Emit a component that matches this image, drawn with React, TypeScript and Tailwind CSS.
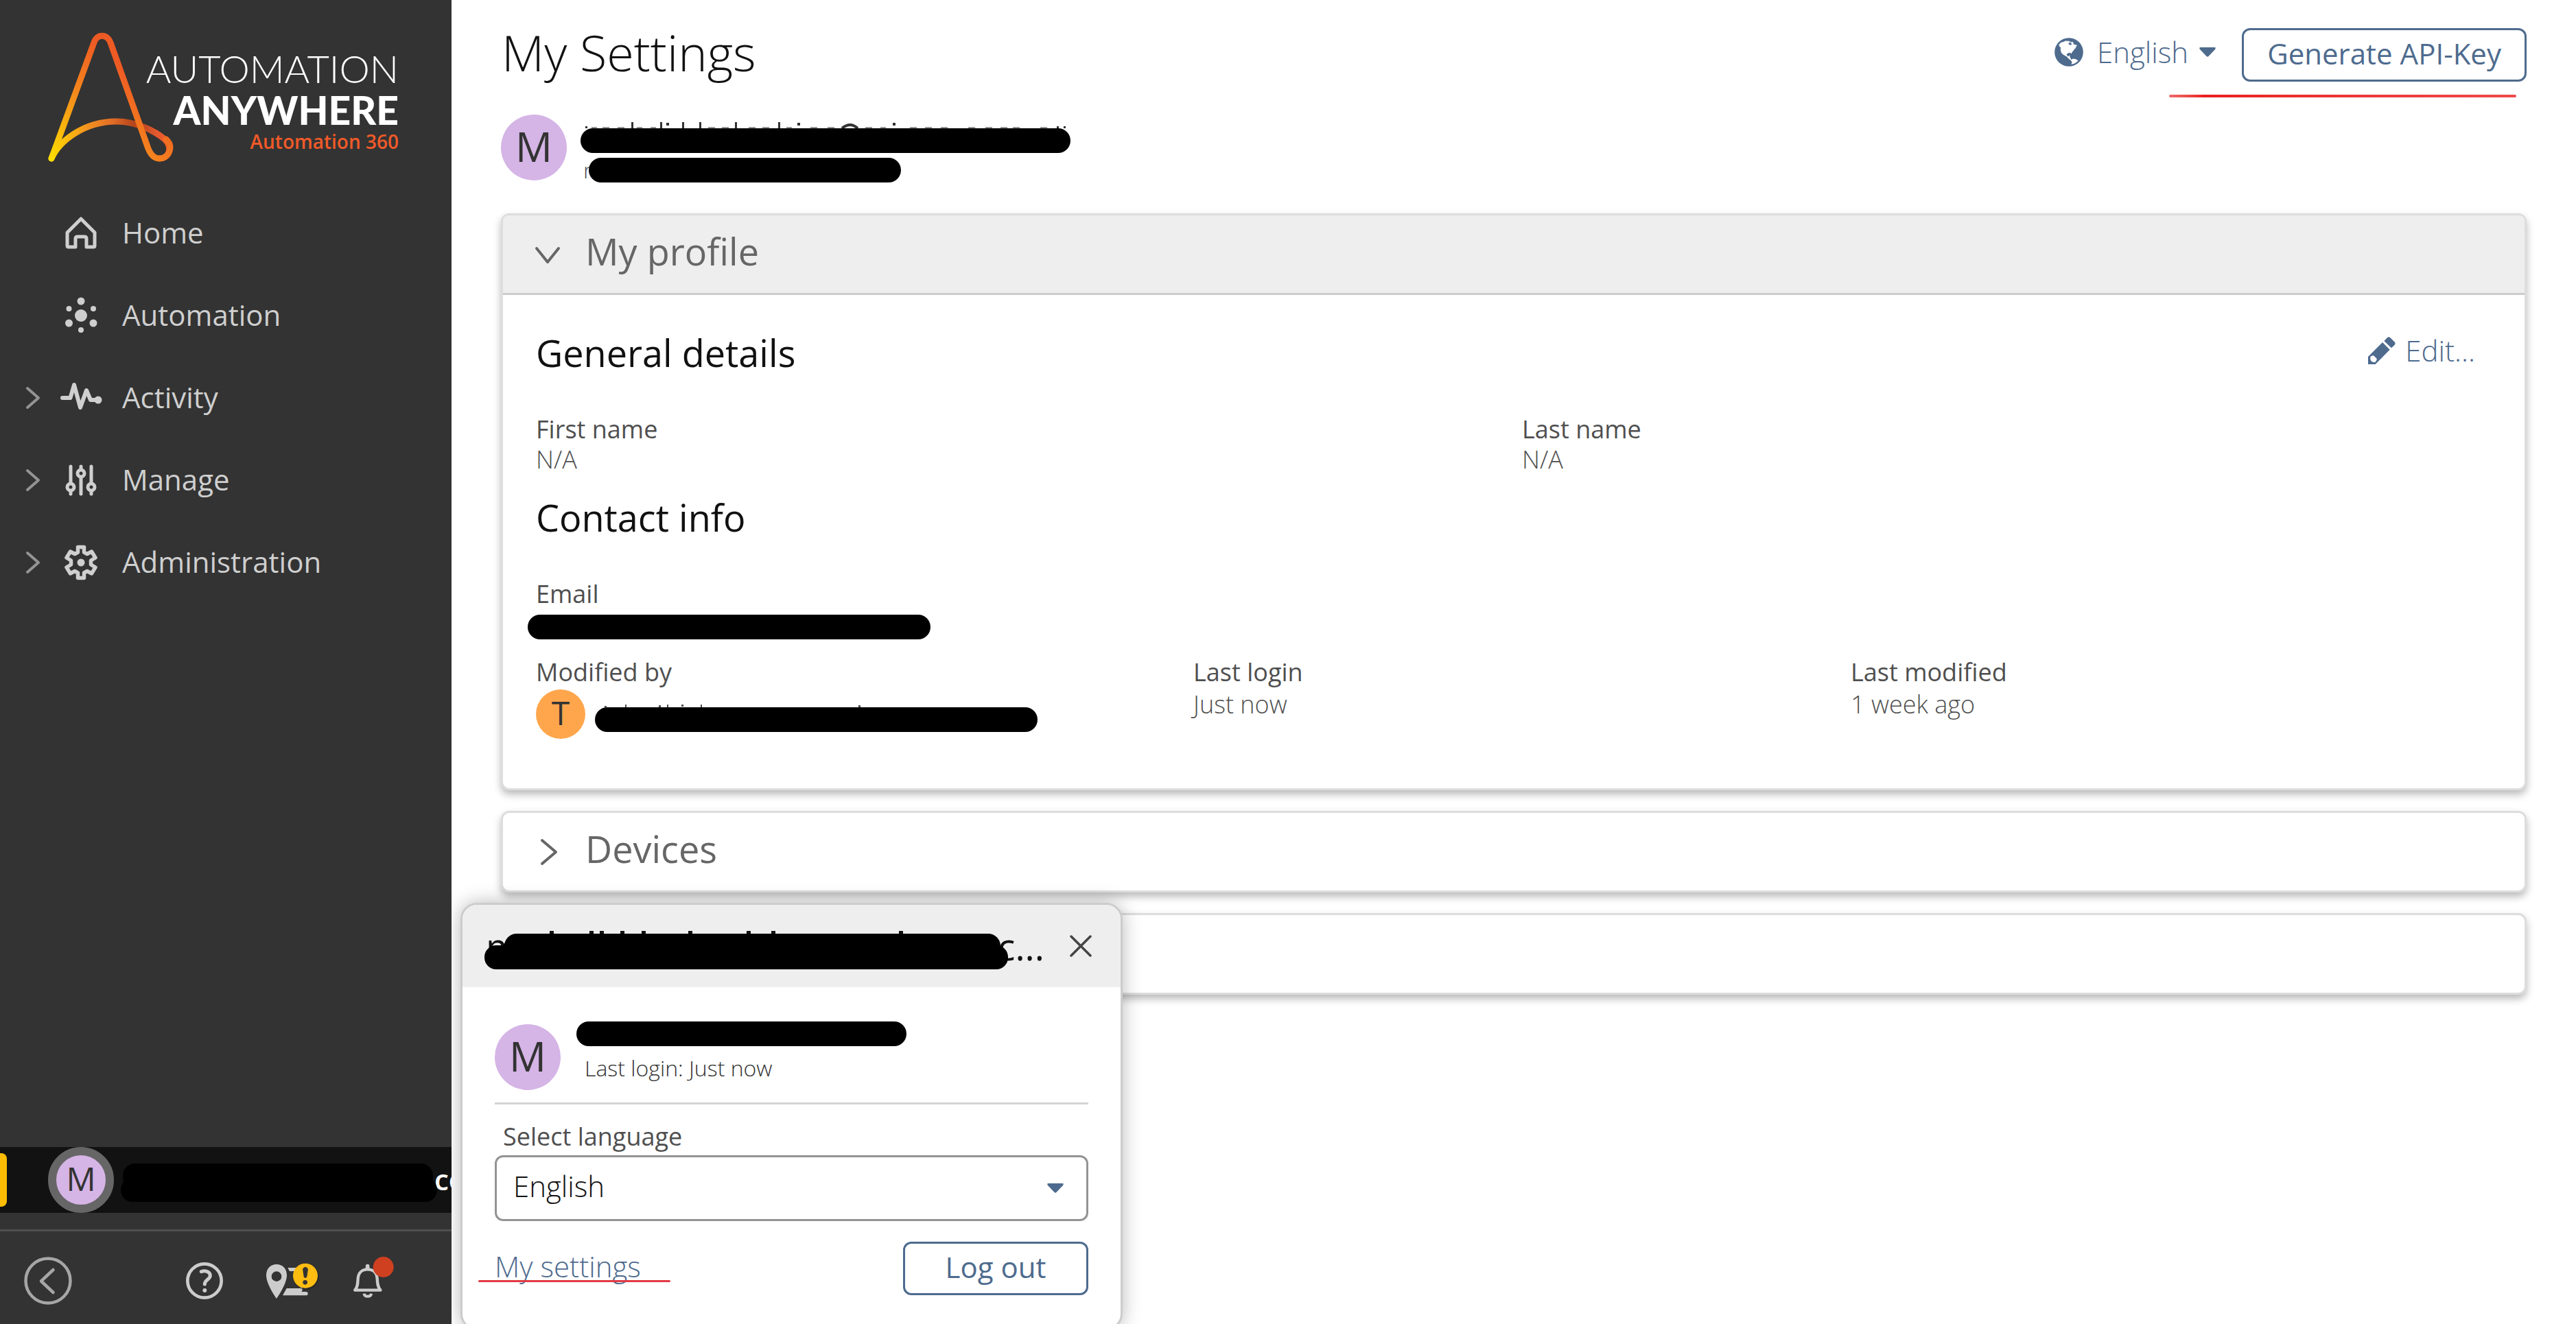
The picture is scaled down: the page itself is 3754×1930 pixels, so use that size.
import type { ReactNode } from "react";

const SANS = "font-['Open_Sans','Noto_Sans',sans-serif]";
const LATO = "font-['Lato','Open_Sans',sans-serif]";

function BrandMark() {
  return (
    <svg className="h-[196px] w-[190px] shrink-0" viewBox="66 44 190 196" fill="none" aria-hidden="true">
      <defs>
        <linearGradient id="stem" x1="74" y1="231" x2="190" y2="110" gradientUnits="userSpaceOnUse">
          <stop offset="0" stopColor="#ffdd00" />
          <stop offset="0.55" stopColor="#f58a1c" />
          <stop offset="1" stopColor="#ee5a24" />
        </linearGradient>
        <linearGradient id="arch" x1="74" y1="0" x2="250" y2="0" gradientUnits="userSpaceOnUse">
          <stop offset="0" stopColor="#ffdd00" />
          <stop offset="0.3" stopColor="#f3921f" />
          <stop offset="0.5" stopColor="#e36f27" />
          <stop offset="0.68" stopColor="#b5451b" />
          <stop offset="0.77" stopColor="#c04a20" />
          <stop offset="0.88" stopColor="#e65a30" />
          <stop offset="1" stopColor="#ee5a24" />
        </linearGradient>
      </defs>
      <path
        d="M75 231 C86 206 122 177 170 177 C198 177 226 191 240 203 C252 215 247 231 232 231"
        stroke="url(#arch)"
        strokeWidth="9"
        strokeLinecap="round"
      />
      <path
        d="M75 231 L137 62 C141 49 156 49 161 62 L214 211 C218 224 224 231 232 231 C242 231 248 223 248 214 C248 209 245 206 242 203"
        stroke="url(#stem)"
        strokeWidth="9"
        strokeLinecap="round"
        strokeLinejoin="round"
      />
    </svg>
  );
}

function NavSvg({ children }: { children: ReactNode }) {
  return (
    <svg className="h-16 w-16 shrink-0" viewBox="0 0 64 64" fill="none" stroke="#cfcfcf" strokeLinecap="round" strokeLinejoin="round" aria-hidden="true">
      {children}
    </svg>
  );
}

const homeIcon = (
  <NavSvg>
    <path d="M12 31 L32 11 L52 31 V50 Q52 52 50 52 H40 V40 Q40 37 37 37 H27 Q24 37 24 40 V52 H14 Q12 52 12 50 Z" strokeWidth="5" />
  </NavSvg>
);

const automationIcon = (
  <NavSvg>
    <g fill="#cfcfcf" stroke="none">
      <circle cx="32" cy="32" r="9" />
      <circle cx="32" cy="11" r="5.5" />
      <circle cx="14.5" cy="22" r="4" />
      <circle cx="50" cy="22" r="4" />
      <circle cx="14.5" cy="43" r="5.5" />
      <circle cx="50" cy="43" r="5.5" />
      <circle cx="32" cy="53" r="4" />
    </g>
  </NavSvg>
);

const activityIcon = (
  <NavSvg>
    <path d="M5 32 H16.500 L22 13 L31 46 L40 21 L46 35 H56" strokeWidth="6" />
    <circle cx="57" cy="35" r="5.500" fill="#cfcfcf" stroke="none" />
  </NavSvg>
);

const manageIcon = (
  <NavSvg>
    <path d="M17 12 V36 M17 50 V52 M32 12 V15 M32 28 V52 M47 12 V36 M47 50 V52" strokeWidth="5" />
    <circle cx="17" cy="42" r="5" strokeWidth="5" />
    <circle cx="32" cy="22" r="5" strokeWidth="5" />
    <circle cx="47" cy="42" r="5" strokeWidth="5" />
  </NavSvg>
);

const adminIcon = (
  <NavSvg>
    <path
      d="M27.500 9.500 H36.500 V17 L41 19.500 L47.500 16 L53 25 L46.500 29 V35 L53 39 L47.500 48 L41 44.500 L36.500 47 V54.500 H27.500 V47 L23 44.500 L16.500 48 L11 39 L17.500 35 V29 L11 25 L16.500 16 L23 19.500 L27.500 17 Z"
      strokeWidth="5.500"
    />
    <circle cx="32" cy="32" r="5.500" fill="#cfcfcf" stroke="none" />
  </NavSvg>
);

const NAV = [
  { label: "Home", icon: homeIcon, expandable: false },
  { label: "Automation", icon: automationIcon, expandable: false },
  { label: "Activity", icon: activityIcon, expandable: true },
  { label: "Manage", icon: manageIcon, expandable: true },
  { label: "Administration", icon: adminIcon, expandable: true },
];

function Sidebar() {
  return (
    <aside className="relative z-20 flex w-[658px] shrink-0 flex-col overflow-hidden bg-[#333333]">
      <div className="flex h-[280px] items-start pt-11 pl-[66px]">
        <BrandMark />
        <div className={`-ml-10 flex w-[365px] flex-col items-end pt-[26px] whitespace-nowrap text-white ${LATO}`}>
          <span className="text-[56px] leading-[60px] font-light">AUTOMATION</span>
          <span className="text-[57px] leading-[60px] font-black">ANYWHERE</span>
          <span className={`text-[28px] leading-8 font-semibold text-[#f15a29] ${SANS}`}>Automation 360</span>
        </div>
      </div>

      <nav className="flex flex-col" aria-label="Main">
        {NAV.map((item) => (
          <a key={item.label} href="#" className="flex h-[120px] items-center pl-9 text-[42px] text-[#cfcfcf]">
            <span className="mr-[26px] w-6">
              {item.expandable && (
                <svg className="h-9 w-6" viewBox="0 0 24 36" fill="none" stroke="#949494" strokeWidth="4" strokeLinecap="round" strokeLinejoin="round" aria-hidden="true">
                  <path d="M4 4 L20 18 L4 32" />
                </svg>
              )}
            </span>
            {item.icon}
            <span className="ml-7 pb-1">{item.label}</span>
          </a>
        ))}
      </nav>

      <button type="button" aria-label="Account" className="mt-auto flex h-24 w-full items-center bg-[#121212]">
        <span className="h-[78px] w-2.5 shrink-0 rounded-r-lg bg-[#ffbc03]" />
        <span className="ml-[60px] flex h-24 w-24 shrink-0 items-center justify-center rounded-full border-[12px] border-[#666666] bg-[#d5b4e6] pb-1 text-[48px] leading-none text-[#333333]">
          M
        </span>
        <svg className="relative z-10 ml-2.5 h-24 w-[461px] shrink-0" viewBox="0 0 461 96" aria-hidden="true">
          <rect x="3" y="24" width="452" height="38" rx="18" />
          <rect x="0" y="45" width="461" height="35" rx="17" />
        </svg>
        <span className="-ml-1 shrink-0 pb-1 text-[42px] font-semibold text-white">co</span>
      </button>

      <div className="mt-6 flex h-[138px] items-start border-t-[3px] border-[#4f4f4f] pt-[37px] pl-[35px]">
        <div className="flex items-center">
          <button type="button" aria-label="Collapse menu" className="h-[70px] w-[70px]">
            <svg className="h-full w-full" viewBox="0 0 70 70" fill="none" stroke="#a6a6a6" strokeWidth="4.500" strokeLinecap="round" aria-hidden="true">
              <circle cx="35" cy="35" r="32.500" />
              <path d="M42.500 19 L25 35.500 L42.500 52" strokeLinejoin="round" />
            </svg>
          </button>
          <button type="button" aria-label="Help" className="ml-[166px] h-[54px] w-[54px]">
            <svg className="h-full w-full" viewBox="63 57 162 162" fill="none" stroke="#cccccc" aria-hidden="true">
              <circle cx="144" cy="138" r="74" strokeWidth="14" />
              <path d="M130 98 C148 92 168 98 169 114 C170 134 145 132 145 153" strokeWidth="15" strokeLinecap="round" />
              <circle cx="145" cy="180" r="9" fill="#cccccc" stroke="none" />
            </svg>
          </button>
          <button type="button" aria-label="Tours" className="ml-[63px] h-[54px] w-[75px]">
            <svg className="h-full w-full overflow-visible" viewBox="414 57 225 162" fill="#cccccc" aria-hidden="true">
              <path
                fillRule="evenodd"
                d="M459 66 C432 66 414 86 414 114 C414 154 459 216 459 216 S504 154 504 114 C504 86 486 66 459 66 Z M459 97 A22 22 0 1 1 459 141 A22 22 0 1 1 459 97 Z"
              />
              <path d="M508 81 H545 V96 H516 Z" />
              <path d="M503 171 H558 L572 160 V180 L568 186 H588 A8 8 0 0 1 588 202 H486 Z" />
              <circle cx="588" cy="121" r="57" fill="#1f1f1f" opacity="0.5" />
              <circle cx="585" cy="116" r="54" fill="#ffbc11" />
              <path d="M573 86 Q585 68 597 86 L592 120 Q585 132 578 120 Z" fill="#333333" />
              <circle cx="584" cy="145" r="10" fill="#333333" />
            </svg>
          </button>
          <button type="button" aria-label="Notifications" className="ml-[52px] h-[54px] w-[59px]">
            <svg className="h-full w-full overflow-visible" viewBox="796 57 177 162" fill="none" stroke="#cccccc" strokeLinecap="round" aria-hidden="true">
              <path d="M858 74 V84" strokeWidth="17" />
              <path d="M803 178 C815 166 815 148 816 128 C818 102 835 88 858 88 C881 88 898 102 900 128 C901 148 902 166 914 178 V179 H803 Z" strokeWidth="13" strokeLinejoin="round" />
              <path d="M842 194 A17 16 0 0 0 875 194" strokeWidth="12" strokeLinecap="butt" />
              <circle cx="927" cy="78" r="45" fill="#cf4020" stroke="none" />
            </svg>
          </button>
        </div>
      </div>
    </aside>
  );
}

function Caret() {
  return (
    <svg className="h-3.5 w-6 shrink-0" viewBox="0 0 24 14" fill="#4e6b8e" aria-hidden="true">
      <path d="M2 0 H22 Q25 0 23 3 L13.500 13 Q12 14.500 10.500 13 L1 3 Q-1 0 2 0 Z" />
    </svg>
  );
}

function GlobeIcon() {
  return (
    <svg className="h-[42px] w-[42px] shrink-0" viewBox="69 108 125 125" aria-hidden="true">
      <circle cx="131.500" cy="170.500" r="62" fill="#4e6b8e" />
      <path
        fill="#ffffff"
        d="M88 138 L97 129 L110 125 L120 120 L122 124 L128 121 L134 125 L138 123 L139 128 L130 130 L131 137 L141 141 L144 133 L137 131 L146 125 L152 131 L150 136 L160 138 L168 143 L160 148 L163 152 L156 156 L152 163 L146 170 L142 177 L136 173 L126 176 L121 182 L128 189 L137 184 L135 190 L138 196 L142 203 L150 199 L162 201 L172 208 L165 214 L155 220 L142 223 L145 214 L140 206 L132 200 L122 190 L106 181 L98 172 L95 160 L96 150 L91 147 Z"
      />
    </svg>
  );
}

function PencilIcon() {
  return (
    <svg className="h-10 w-10 shrink-0" viewBox="63 71 120 120" fill="#4e6b8e" aria-hidden="true">
      <path d="M63 191 V158 L126 95 L158 127 L95 191 Z" />
      <path d="M133 89 L147 75 Q153 69 160 75 L178 93 Q185 99 179 106 L165 120 Z" />
      <path d="M73 158 L82 153 Q88 151 92 157 L101 167 Q102 173 98 177 L94 182 H84 Q74 177 73 170 Z" fill="#ffffff" />
    </svg>
  );
}

function Avatar({ letter, className }: { letter: string; className: string }) {
  return <span className={`flex shrink-0 items-center justify-center rounded-full pb-1 leading-none text-[#333333] ${className}`}>{letter}</span>;
}

const CARD = "rounded-xl border-[3px] border-[#dddddd] bg-white shadow-[0_6px_12px_rgba(0,0,0,0.28)]";

function Field({ label, children }: { label: string; children: ReactNode }) {
  return (
    <div className="text-[36px] leading-[44px] text-[#4f4f4f]">
      <dt>{label}</dt>
      <dd className="font-light">{children}</dd>
    </div>
  );
}

function ProfileCard() {
  return (
    <section className={`mt-[45px] ${CARD}`}>
      <h2>
        <button type="button" aria-expanded="true" className="flex h-[116px] w-full items-center rounded-t-lg border-b-[3px] border-[#cccccc] bg-[#eeeeee] pl-[41px] text-[54px] text-[#666666]">
          <svg className="h-12 w-12" viewBox="0 0 48 48" fill="none" stroke="#666666" strokeWidth="4" strokeLinecap="round" strokeLinejoin="round" aria-hidden="true">
            <path d="M8 15 L24 35 L40 15" />
          </svg>
          <span className="ml-[31px] pb-2">My profile</span>
        </button>
      </h2>
      <div className="px-12 pt-12 pb-[72px]">
        <div className="flex items-start justify-between">
          <h3 className="text-[54px] leading-[72px] text-[#111111]">General details</h3>
          <button type="button" className="flex items-center pr-6 text-[42px] leading-[66px] font-light text-[#4e6b8e]">
            <PencilIcon />
            <span className="ml-3.5">Edit...</span>
          </button>
        </div>
        <dl className="mt-[54px] grid grid-cols-2 gap-6">
          <Field label="First name">N/A</Field>
          <Field label="Last name">N/A</Field>
        </dl>
        <h3 className="mt-[26px] text-[54px] leading-[72px] text-[#111111]">Contact info</h3>
        <dl className="mt-[54px]">
          <Field label="Email">
            <span className="mt-2 -ml-3 block h-9 w-[587px] rounded-full bg-black" />
          </Field>
        </dl>
        <dl className="mt-[26px] grid grid-cols-3 gap-6">
          <Field label="Modified by">
            <span className="mt-[3px] flex items-start">
              <Avatar letter="T" className="h-[72px] w-[72px] bg-[#ffa64d] text-[48px] font-normal" />
              <span className="relative mt-[26px] ml-3.5 block h-9 w-[645px] rounded-full bg-black">
                <svg className="absolute bottom-full left-0 h-1 w-[645px]" viewBox="0 0 645 4" fill="#4f4f4f" aria-hidden="true">
                  <path d="M14 2h3v2h-3z M44 0h2v4h-2z M93 1h3v3h-3z M105 0h2v4h-2z M126 0h3v3h-3z M154 0h2v4h-2z M384 1h3v3h-3z" />
                </svg>
              </span>
            </span>
          </Field>
          <Field label="Last login">
            <span className="mt-[3px] block">Just now</span>
          </Field>
          <Field label="Last modified">
            <span className="mt-[3px] block">1 week ago</span>
          </Field>
        </dl>
      </div>
    </section>
  );
}

function Main() {
  return (
    <main className="min-w-0 flex-1 px-[72px] pt-[41px]">
      <header className="flex items-start justify-between">
        <h1 className="ml-px text-[72px] leading-[70px] font-light text-[#111111]">My Settings</h1>
        <div className="relative flex items-start">
          <button type="button" className="flex items-center text-[42px] leading-[70px] font-light text-[#4e6b8e]">
            <GlobeIcon />
            <span className="mr-4 ml-5">English</span>
            <Caret />
          </button>
          <button type="button" className="ml-[38px] h-[78px] rounded-xl border-[3px] border-[#4e6b8e] px-[34px] pb-1 text-[42px] leading-[66px] whitespace-nowrap text-[#4e6b8e]">
            Generate API-Key
          </button>
          <span className="absolute top-[97px] right-[15px] h-1 w-[506px] rounded-full bg-linear-to-r from-[#ee6a6a] via-[#ea1f1f] via-10% to-[#ee4a4a]" />
        </div>
      </header>

      <div className="mt-12 flex items-start">
        <Avatar letter="M" className="h-24 w-24 bg-[#d5b4e6] text-[60px]" />
        <div className="mt-5 ml-5">
          <div className="relative h-9 w-[714px] rounded-full bg-black">
            <svg className="absolute bottom-full left-0 h-[9px] w-[714px]" viewBox="0 0 714 9" fill="#333333" aria-hidden="true">
              <path d="M7 6h3v3h-3z M74 0h3v9h-3z M116 0h3v9h-3z M125 1h4v4h-4z M148 0h3v9h-3z M173 0h3v9h-3z M225 0h3v9h-3z M288 0h3v9h-3z M316 1h4v4h-4z M455 1h4v4h-4z M694 6h3v3h-3z M704 6h3v3h-3z" />
              <path
                opacity="0.5"
                d="M16 7h8v2h-8z M32 7h10v2h-10z M54 7h10v2h-10z M82 7h8v2h-8z M102 7h8v2h-8z M186 7h10v2h-10z M206 7h10v2h-10z M245 7h10v2h-10z M265 7h10v2h-10z M300 7h8v2h-8z M335 7h10v2h-10z M360 7h10v2h-10z M415 7h10v2h-10z M437 7h8v2h-8z M480 7h10v2h-10z M502 7h10v2h-10z M525 7h10v2h-10z M565 7h10v2h-10z M590 7h10v2h-10z M612 7h10v2h-10z M630 7h10v2h-10z M670 7h10v2h-10z"
              />
              <path d="M381 9 Q393 -1 404 9" fill="none" stroke="#333333" strokeWidth="4" />
            </svg>
          </div>
          <div className="relative mt-[7px] flex h-9 items-center">
            <span className="w-3 pl-1 text-[32px] leading-9 font-light text-[#4f4f4f]">m</span>
            <span className="relative h-9 w-[455px] rounded-full bg-black" />
          </div>
        </div>
      </div>

      <ProfileCard />

      <section className={`mt-[30px] ${CARD}`}>
        <h2>
          <button type="button" aria-expanded="false" className="flex h-[113px] w-full items-center pl-[41px] text-[54px] text-[#666666]">
            <svg className="h-12 w-12" viewBox="0 0 48 48" fill="none" stroke="#666666" strokeWidth="4" strokeLinecap="round" strokeLinejoin="round" aria-hidden="true">
              <path d="M16 7 L36 24 L16 41" />
            </svg>
            <span className="ml-[31px] pb-2">Devices</span>
          </button>
        </h2>
      </section>

      <section className={`mt-[30px] h-[119px] ${CARD}`} />
    </main>
  );
}

function AccountPopup() {
  return (
    <div role="dialog" aria-label="Account" className="absolute -bottom-[9px] left-[671px] z-10 w-[965px] rounded-3xl border-[3px] border-[#cccccc] bg-white shadow-[0_0_28px_rgba(0,0,0,0.28)]">
      <div className="flex h-[120px] items-center rounded-t-[21px] bg-[#eeeeee] pl-[34px]">
        <div className="relative flex w-[814px] justify-between text-[54px] leading-[72px] text-[#111111]">
          <span className="font-medium">m</span>
          <span>c...</span>
          <svg className="absolute inset-y-0 -left-2 h-full w-[780px]" viewBox="700 1343 780 72" aria-hidden="true">
            <path fill="#111111" d="M801 1357h6v8h-6z M859 1357h6v8h-6z M874 1357h6v8h-6z M904 1357h6v8h-6z M935 1357h6v8h-6z M1003 1357h6v8h-6z M1088 1357h6v8h-6z M1124 1357h6v8h-6z M1310 1357h6v8h-6z" />
            <rect x="735" y="1361" width="723" height="40" rx="18" />
            <rect x="706" y="1378" width="763" height="35" rx="17" />
          </svg>
        </div>
        <button type="button" aria-label="Close" className="ml-[37px] h-8 w-8">
          <svg className="h-full w-full" viewBox="0 0 32 32" stroke="#444444" strokeWidth="3.500" strokeLinecap="round" aria-hidden="true">
            <path d="M2 2 L30 30 M30 2 L2 30" />
          </svg>
        </button>
      </div>
      <div className="px-[47px] pt-[50px] pb-12">
        <div className="flex items-start">
          <Avatar letter="M" className="mt-1 h-24 w-24 bg-[#d5b4e6] text-[60px]" />
          <div className="ml-[23px]">
            <div className="h-9 w-[481px] rounded-full bg-black" />
            <p className="mt-3 ml-3 text-[32px] leading-10 font-light text-[#333333]">Last login: Just now</p>
          </div>
        </div>
        <hr className="mt-[18px] border-t-[3px] border-[#d4d4d4]" />
        <label htmlFor="language" className="mt-[25px] ml-3 block text-[36px] leading-[44px] text-[#4f4f4f]">
          Select language
        </label>
        <div className="relative mt-[5px]">
          <select id="language" className="h-24 w-full appearance-none rounded-xl border-[3px] border-[#949494] bg-white pb-2 pl-6 text-[42px] font-light text-[#111111]">
            <option>English</option>
          </select>
          <span className="pointer-events-none absolute inset-y-0 right-9 flex items-center">
            <Caret />
          </span>
        </div>
        <div className="mt-[30px] flex items-center justify-between">
          <span className="relative pb-2">
            <a href="#" className="text-[42px] font-light text-[#4e6b8e] underline decoration-[3px] underline-offset-4">
              My settings
            </a>
            <span className="absolute -left-6 bottom-4 h-[3px] w-[280px] rounded-full bg-[#e23b45]" />
          </span>
          <button type="button" className="h-[78px] w-[270px] rounded-xl border-[3px] border-[#4e6b8e] pb-1 text-[42px] leading-[66px] text-[#4e6b8e]">
            Log out
          </button>
        </div>
      </div>
    </div>
  );
}

export default function App() {
  return (
    <div className={`relative flex h-screen overflow-hidden bg-white ${SANS}`}>
      <Sidebar />
      <Main />
      <AccountPopup />
    </div>
  );
}
